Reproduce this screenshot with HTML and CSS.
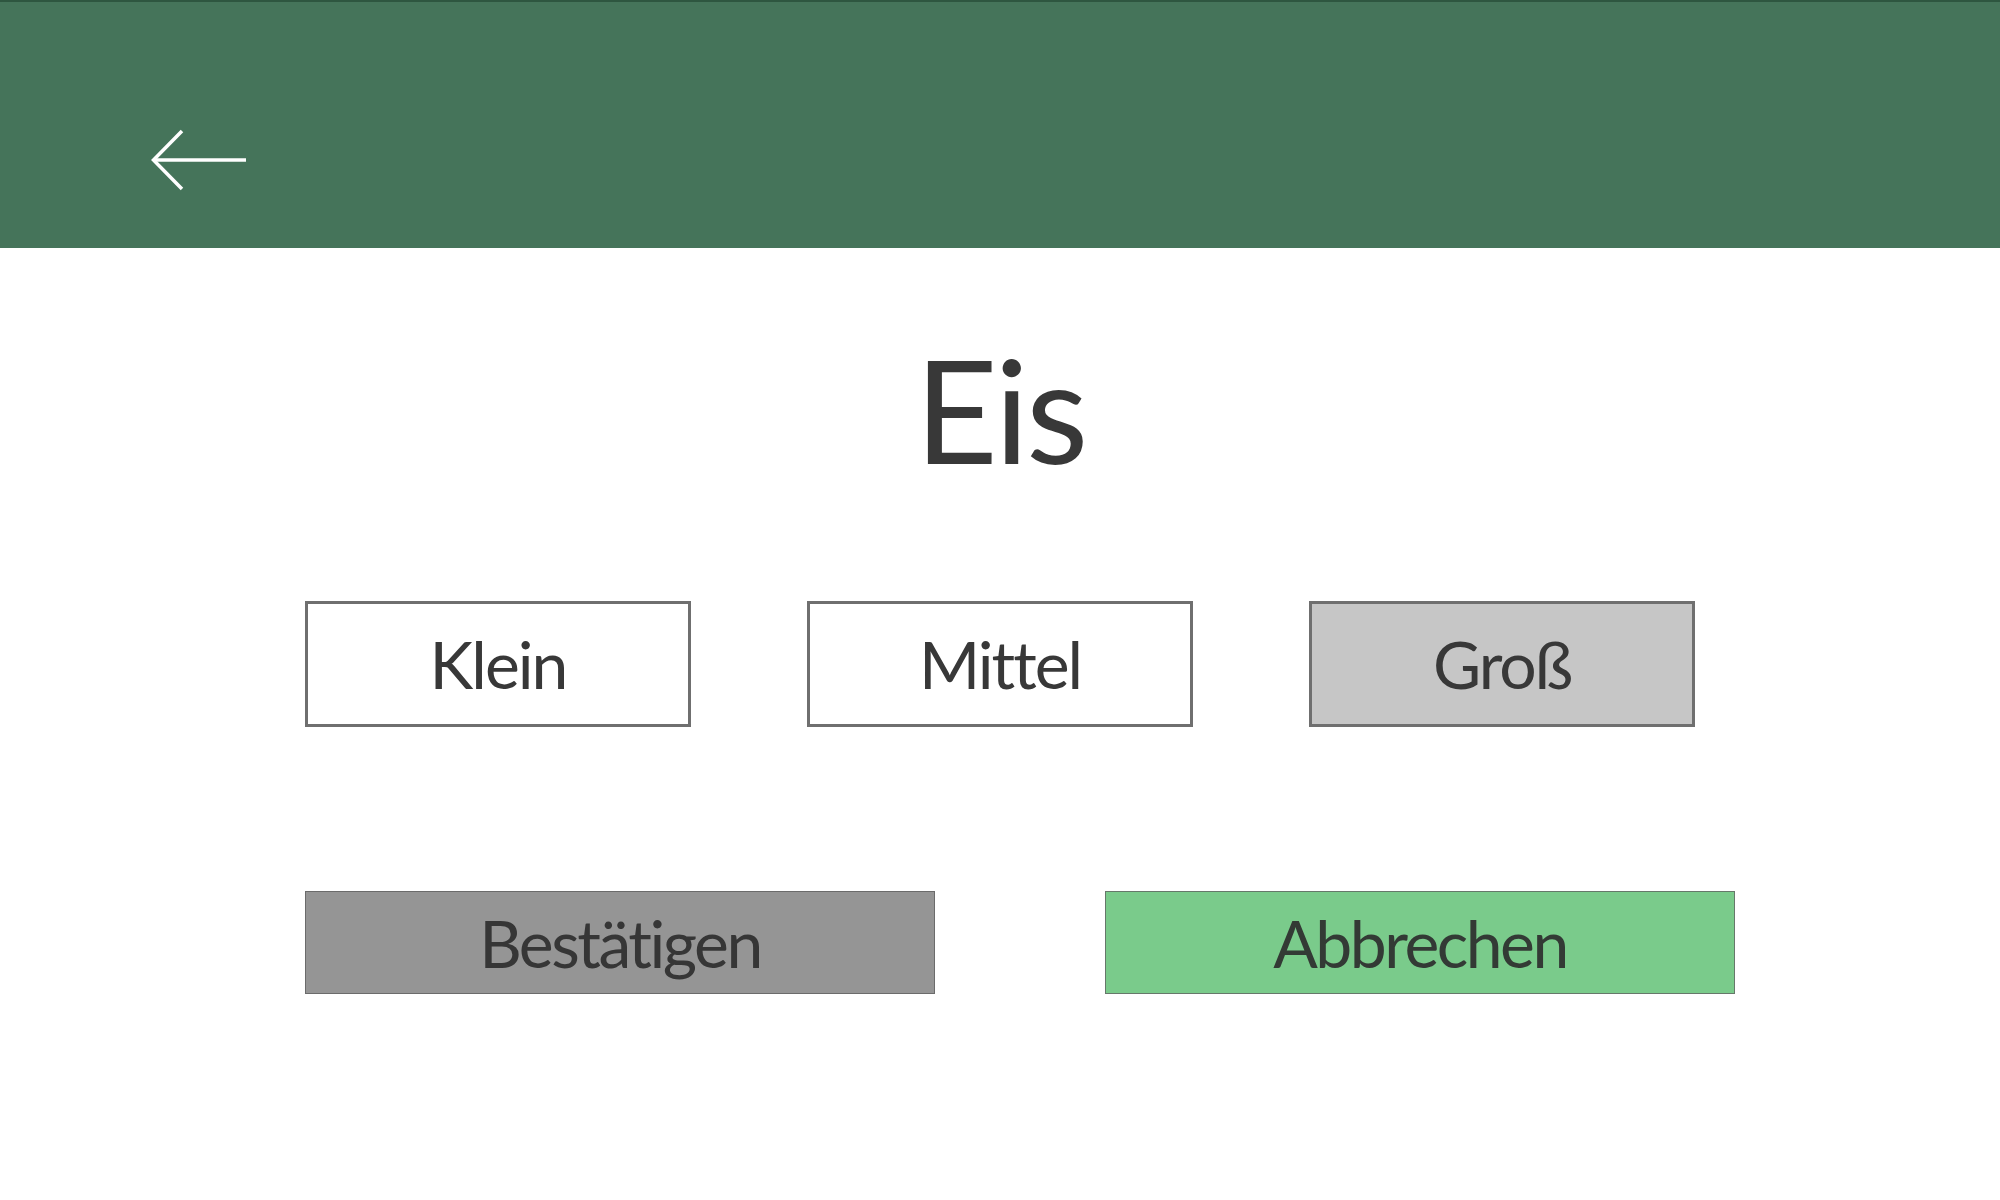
FILE: index.html
```html
<!DOCTYPE html>
<html lang="de">
<head>
<meta charset="utf-8">
<title>Eis</title>
<link rel="stylesheet" href="styles.css">
</head>
<body>
<header class="topbar">
  <button class="back" aria-label="Zurück">
    <svg width="96" height="62" viewBox="0 0 96 62" fill="none" stroke="#ffffff" stroke-width="3.5">
      <path d="M2.5 31 H95"/>
      <path d="M31 2 L2.5 31 L31 60"/>
    </svg>
  </button>
</header>
<main class="content">
  <h1 class="title">Eis</h1>
  <div class="sizes">
    <button class="size">Klein</button>
    <button class="size">Mittel</button>
    <button class="size size-selected">Groß</button>
  </div>
  <div class="actions">
    <button class="action action-confirm">Bestätigen</button>
    <button class="action action-cancel">Abbrechen</button>
  </div>
</main>
</body>
</html>
```
FILE: styles.css
```css
html, body {
  margin: 0;
  padding: 0;
  background: #ffffff;
}
body {
  font-family: "Lato", "Noto Sans", sans-serif;
  color: #383838;
  width: 2000px;
  height: 1200px;
  overflow: hidden;
}
.topbar {
  box-sizing: border-box;
  height: 248px;
  background: #45745a;
  border-top: 2px solid #2e5640;
  display: flex;
  align-items: flex-start;
  padding: 127px 0 0 151px;
}
.back {
  background: none;
  border: 0;
  padding: 0;
  margin: 0;
  display: block;
  cursor: pointer;
}
.back svg { display: block; }
.content {
  display: flex;
  flex-direction: column;
}
.title {
  margin: 89px 0 0 0;
  font-weight: 400;
  font-size: 144px;
  line-height: 144px;
  text-align: center;
  color: #383838;
  letter-spacing: -3px;
}
.sizes {
  display: flex;
  justify-content: center;
  gap: 116px;
  margin-top: 120px;
}
.size {
  box-sizing: border-box;
  width: 386px;
  height: 126px;
  border: 3px solid #6f6f6f;
  background: #ffffff;
  font-family: inherit;
  font-size: 66px;
  line-height: 118px;
  padding: 0;
  color: #383838;
  letter-spacing: -2px;
}
.size-selected {
  background: #c6c6c6;
}
.actions {
  display: flex;
  gap: 170px;
  padding-left: 305px;
  margin-top: 164px;
}
.action {
  box-sizing: border-box;
  width: 630px;
  height: 103px;
  border: 1px solid #6b6b6b;
  font-family: inherit;
  font-size: 66px;
  line-height: 101px;
  padding: 0;
  color: #363636;
  letter-spacing: -2.5px;
}
.action-confirm {
  background: #959595;
}
.action-cancel {
  background: #7acb8b;
  border-color: #66786a;
  color: #333a35;
}
```
